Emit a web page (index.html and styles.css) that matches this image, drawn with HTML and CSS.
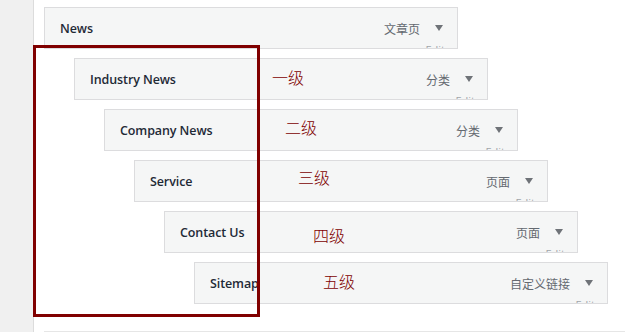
FILE: index.html
```html
<!DOCTYPE html>
<html>
<head>
<meta charset="utf-8">
<link rel="stylesheet" href="styles.css">
</head>
<body>
<div class="page">
  <aside class="side"></aside>
  <main class="main">
    <ul class="menu">
      <li class="item d0"><span class="title">News</span><span class="controls"><span class="type">文章页</span><span class="arrow"></span></span><span class="edit">Edit</span></li>
      <li class="item d1"><span class="title">Industry News</span><span class="controls"><span class="type">分类</span><span class="arrow"></span></span><span class="edit">Edit</span></li>
      <li class="item d2"><span class="title">Company News</span><span class="controls"><span class="type">分类</span><span class="arrow"></span></span><span class="edit">Edit</span></li>
      <li class="item d3"><span class="title">Service</span><span class="controls"><span class="type">页面</span><span class="arrow"></span></span><span class="edit">Edit</span></li>
      <li class="item d4"><span class="title">Contact Us</span><span class="controls"><span class="type">页面</span><span class="arrow"></span></span><span class="edit">Edit</span></li>
      <li class="item d5"><span class="title">Sitemap</span><span class="controls"><span class="type">自定义链接</span><span class="arrow"></span></span><span class="edit">Edit</span></li>
    </ul>
    <div class="next"></div>
  </main>
  <div class="annot-box"></div>
  <span class="annot a1">一级</span>
  <span class="annot a2">二级</span>
  <span class="annot a3">三级</span>
  <span class="annot a4">四级</span>
  <span class="annot a5">五级</span>
</div>
</body>
</html>
```
FILE: styles.css
```css
html, body {
  margin: 0;
  padding: 0;
  background: #fff;
}
.page {
  position: relative;
  display: flex;
  width: 625px;
  height: 332px;
  overflow: hidden;
  font-family: "Open Sans", "Noto Sans CJK SC", sans-serif;
}
.side {
  width: 33px;
  flex: none;
  background: #f0f0f0;
  border-right: 1px solid #dcdcdc;
}
.main {
  flex: 1;
  padding: 7px 0 0 10px;
}
.menu {
  list-style: none;
  margin: 0;
  padding: 0;
  display: flex;
  flex-direction: column;
  gap: 9px;
}
.item {
  position: relative;
  box-sizing: border-box;
  width: 414px;
  height: 42px;
  padding: 0 14px 0 15px;
  border: 1px solid #dcdcde;
  background: #f5f6f6;
  display: flex;
  align-items: center;
  justify-content: space-between;
  overflow: hidden;
}
.d1 { margin-left: 30px; }
.d2 { margin-left: 60px; }
.d3 { margin-left: 90px; }
.d4 { margin-left: 120px; }
.d5 { margin-left: 150px; }
.title {
  font-size: 12.5px;
  font-weight: 600;
  color: #1f2a36;
  letter-spacing: -0.1px;
}
.controls {
  display: flex;
  align-items: center;
  gap: 15px;
}
.type {
  font-family: "Noto Sans CJK SC", sans-serif;
  font-size: 12px;
  color: #646970;
}
.arrow {
  width: 0;
  height: 0;
  border-left: 4px solid transparent;
  border-right: 4px solid transparent;
  border-top: 6px solid #6f7378;
  margin-top: -1px;
}
.edit {
  position: absolute;
  right: 12px;
  top: 35px;
  font-size: 11px;
  color: #a0a5aa;
  line-height: 14px;
}
.next {
  margin-top: 27px;
  height: 20px;
  border-top: 1px solid #e6e6e6;
}
.annot-box {
  position: absolute;
  left: 33px;
  top: 45px;
  width: 227px;
  height: 272px;
  box-sizing: border-box;
  border: 3px solid #800000;
}
.annot {
  position: absolute;
  font-family: "Noto Sans CJK SC", sans-serif;
  font-size: 16px;
  line-height: 18px;
  color: #800000;
  font-weight: 300;
}
.a1 { left: 272px; top: 68px; }
.a2 { left: 285px; top: 118px; }
.a3 { left: 298px; top: 168px; }
.a4 { left: 313px; top: 226px; }
.a5 { left: 323px; top: 272px; }
```
